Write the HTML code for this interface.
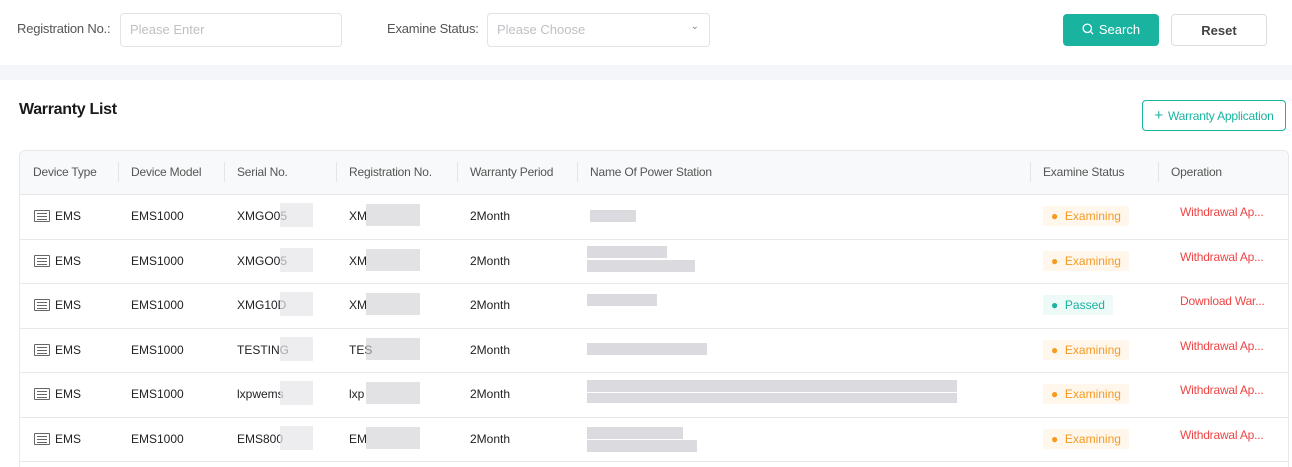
<!DOCTYPE html>
<html><head><meta charset="utf-8"><style>
*{box-sizing:border-box;margin:0;padding:0}
html{width:1292px;height:467px;overflow:hidden}
body{width:1292px;height:467px;overflow:hidden;background:#fff;font-family:"Liberation Sans",sans-serif;font-size:12px;color:#222;position:relative}
.a{position:absolute;white-space:nowrap}
.lbl{font-size:13px;color:#555;letter-spacing:-0.2px}
.inp{position:absolute;border:1px solid #e3e3e6;border-radius:4px;height:34px;top:13px;color:#c0c0c4;font-size:13px;padding:8px 9px}
.th{position:absolute;top:165px;color:#555;font-size:12px;letter-spacing:-0.2px}
.sep{position:absolute;top:162px;width:1px;height:20px;background:#e5e5e8}
.rl{position:absolute;left:20px;width:1268px;height:1px;background:#e8e8ec}
.blk{position:absolute;background:#cfcfd4}
.lt{background:#e6e6ea}
.tag{position:absolute;height:20px;font-size:12px;padding:3px 8px 0 8px;border-radius:2px}
.ex{background:#fff7ec;color:#f59a23}
.ps{background:#eefaf8;color:#1ab3a0}
.op{position:absolute;left:1180px;color:#ef4444;font-size:12px;letter-spacing:-0.2px}
</style></head><body>
<div class="a lbl" style="left:17px;top:21px">Registration No.:</div>
<div class="inp" style="left:120px;width:222px">Please Enter</div>
<div class="a lbl" style="left:387px;top:21px">Examine Status:</div>
<div class="inp" style="left:487px;width:223px">Please Choose<span style="position:absolute;right:10px;top:7px;color:#888;font-size:10px">&#8964;</span></div>
<div class="a" style="left:1063px;top:14px;width:96px;height:32px;background:#1ab3a0;border-radius:4px;color:#fff;font-size:13px;padding-top:8px;text-align:center"><svg width="12" height="12" viewBox="0 0 12 12" style="vertical-align:-1px;margin-right:5px"><circle cx="5.3" cy="5.3" r="4.2" fill="none" stroke="#fff" stroke-width="1.3"/><path d="M8.4 8.4L11 11" stroke="#fff" stroke-width="1.3"/></svg>Search</div>
<div class="a" style="left:1171px;top:14px;width:96px;height:32px;border:1px solid #ddd;border-radius:4px;color:#444;font-size:13px;padding-top:8px;text-align:center;font-weight:bold">Reset</div>
<div class="a" style="left:0;top:65px;width:1292px;height:15px;background:#f5f6fa"></div>
<div class="a" style="left:19px;top:101px;font-size:16px;font-weight:bold;color:#1a1a1a;letter-spacing:-0.3px">Warranty List</div>
<div class="a" style="left:1142px;top:100px;width:144px;height:31px;border:1px solid #1ab3a0;border-radius:4px;color:#1ab3a0;font-size:12px;padding-top:8px;text-align:center;letter-spacing:-0.2px"><span style="font-size:15px;line-height:10px;margin-right:5px">+</span>Warranty Application</div>
<div class="a" style="left:19px;top:150px;width:1270px;height:317px;border:1px solid #e8e8ec;border-bottom:none;border-radius:6px 6px 0 0"></div>
<div class="a" style="left:20px;top:151px;width:1268px;height:43px;background:#f8f9fa;border-radius:6px 6px 0 0"></div>
<div class="th" style="left:33px">Device Type</div><div class="th" style="left:131px">Device Model</div><div class="th" style="left:237px">Serial No.</div><div class="th" style="left:349px">Registration No.</div><div class="th" style="left:470px">Warranty Period</div><div class="th" style="left:590px">Name Of Power Station</div><div class="th" style="left:1043px">Examine Status</div><div class="th" style="left:1171px">Operation</div>
<div class="sep" style="left:118px"></div><div class="sep" style="left:224px"></div><div class="sep" style="left:336px"></div><div class="sep" style="left:457px"></div><div class="sep" style="left:577px"></div><div class="sep" style="left:1030px"></div><div class="sep" style="left:1158px"></div>
<div class="rl" style="top:194px"></div><div class="rl" style="top:239px"></div><div class="rl" style="top:283px"></div><div class="rl" style="top:328px"></div><div class="rl" style="top:372px"></div><div class="rl" style="top:417px"></div><div class="rl" style="top:461px"></div>

<div id="rows"></div>
<script>
var serial=["XMGO05","XMGO05","XMG10D","TESTING","lxpwems","EMS800"];
var reg=["XM","XM","XM","TES","lxp","EM"];
var st=[0,0,1,0,0,0];
var pw=[[[590,210,46,12]],[[587,246,80,12],[587,260,108,12]],[[587,294,70,12]],[[587,343,120,12]],[[587,380,370,12],[587,393,370,10]],[[587,427,96,12],[587,440,110,12]]];
var h="";
for(var i=0;i<6;i++){var y=209+i*44.6;
h+='<div class="a" style="left:34px;top:'+(y+1)+'px;width:16px;height:12px;border:1px solid #666;border-radius:1px"><div style="margin:2px 2px;height:1px;background:#666;box-shadow:0 3px #666,0 6px #666"></div></div>';
h+='<div class="a" style="left:55px;top:'+y+'px">EMS</div><div class="a" style="left:131px;top:'+y+'px">EMS1000</div>';
h+='<div class="a" style="left:237px;top:'+y+'px">'+serial[i]+'</div><div class="blk lt" style="left:280px;top:'+(y-6)+'px;width:33px;height:24px;opacity:.7"></div>';
h+='<div class="a" style="left:349px;top:'+y+'px">'+reg[i]+'</div><div class="blk" style="left:366px;top:'+(y-5)+'px;width:54px;height:22px;opacity:.6"></div>';
h+='<div class="a" style="left:470px;top:'+y+'px">2Month</div>';
pw[i].forEach(function(b){h+='<div class="blk" style="left:'+b[0]+'px;top:'+b[1]+'px;width:'+b[2]+'px;height:'+b[3]+'px;opacity:.75"></div>';});
if(st[i])h+='<div class="tag ps" style="left:1043px;top:'+(y-3)+'px">&#9679;&nbsp; Passed</div><div class="op" style="top:'+(y-4)+'px">Download War...</div>';
else h+='<div class="tag ex" style="left:1043px;top:'+(y-3)+'px">&#9679;&nbsp; Examining</div><div class="op" style="top:'+(y-4)+'px">Withdrawal Ap...</div>';
}
document.getElementById('rows').innerHTML=h;
</script>
</body></html>
